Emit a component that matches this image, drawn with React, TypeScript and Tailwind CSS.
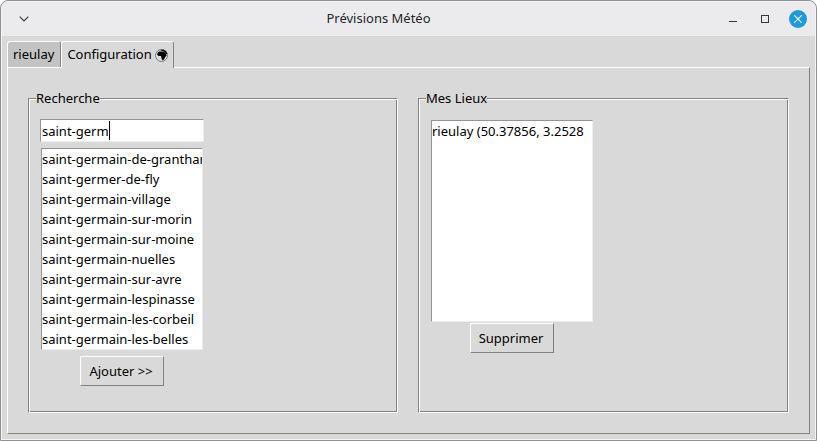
import React, { useState } from "react";

const results = [
  "saint-germain-de-grantham",
  "saint-germer-de-fly",
  "saint-germain-village",
  "saint-germain-sur-morin",
  "saint-germain-sur-moine",
  "saint-germain-nuelles",
  "saint-germain-sur-avre",
  "saint-germain-lespinasse",
  "saint-germain-les-corbeil",
  "saint-germain-les-belles",
];

const places = ["rieulay (50.37856, 3.2528"];

const sunken =
  "border border-t-[#949494] border-l-[#949494] border-r-[#ededed] border-b-[#ededed] bg-white outline-none";

function Globe() {
  return (
    <svg width="13" height="13" viewBox="0 0 26 26" aria-hidden="true">
      <circle cx="13" cy="13" r="12" fill="#dedede" stroke="#555" strokeWidth="1.4" />
      <path
        d="M8 5 L14 5 L20 7 L22 11 L24 12 L21 15 L19 19 L16 23 L14 22 L13 18 L12 14 L7 14 L4 11 L6 7 Z"
        fill="#000"
      />
      <path d="M10 2 L17 1 L22 4 L25 10 L21 10 L19 6 L14 4 Z" fill="#111" />
    </svg>
  );
}

function TitleBar() {
  return (
    <header className="grid h-[34px] grid-cols-[auto_1fr_auto] items-center bg-[#ebebed] pr-2 pl-[14px] text-[#232629]">
      <button type="button" aria-label="Menu" className="flex size-4 items-center justify-center">
        <svg width="10" height="6" viewBox="0 0 10 6" fill="none" stroke="#3b3e41" strokeWidth="1.2">
          <path d="M0.7 0.7 L5 5 L9.3 0.7" />
        </svg>
      </button>
      <h1 className="pb-[2px] text-center leading-5">Prévisions Météo</h1>
      <div className="flex items-center justify-end gap-4">
        <button type="button" aria-label="Réduire" className="flex size-4 items-center justify-center">
          <svg width="8" height="8" viewBox="0 0 8 8">
            <rect y="6" width="8" height="1" fill="#35383b" />
          </svg>
        </button>
        <button type="button" aria-label="Agrandir" className="flex size-4 items-center justify-center">
          <svg width="8" height="8" viewBox="0 0 8 8">
            <rect x="0.5" y="0.5" width="7" height="7" fill="none" stroke="#35383b" />
          </svg>
        </button>
        <button
          type="button"
          aria-label="Fermer"
          className="flex size-[18px] items-center justify-center rounded-full bg-[#1d99dc]"
        >
          <svg width="8" height="8" viewBox="0 0 8 8" stroke="#fff" strokeWidth="1.1">
            <path d="M0.3 0.3 L7.7 7.7 M7.7 0.3 L0.3 7.7" />
          </svg>
        </button>
      </div>
    </header>
  );
}

function Group({ title, children }: { title: string; children: React.ReactNode }) {
  return (
    <fieldset className="min-w-0 border border-t-[#828282] border-r-white border-b-white border-l-[#828282] px-[11px] shadow-[inset_1px_1px_0_#fff,inset_-1px_-1px_0_#828282]">
      <legend className="-ml-1 bg-[#d9d9d9] leading-[18px]">{title}</legend>
      {children}
    </fieldset>
  );
}

function ListBox({ label, items }: { label: string; items: string[] }) {
  return (
    <select
      size={10}
      aria-label={label}
      className={`block h-[202px] w-[162px] appearance-none overflow-hidden p-0 pt-px ${sunken}`}
    >
      {items.map((item) => (
        <option key={item} className="h-5 min-h-5 overflow-hidden p-0 leading-5 whitespace-nowrap">
          {item}
        </option>
      ))}
    </select>
  );
}

function PushButton({ children }: { children: React.ReactNode }) {
  return (
    <button
      type="button"
      className="h-[30px] w-[84px] border border-t-white border-r-[#828282] border-b-[#828282] border-l-white pt-px pr-[2px]"
    >
      {children}
    </button>
  );
}

export default function App() {
  const [query, setQuery] = useState("saint-germ");
  return (
    <div className="min-h-screen bg-white font-['Noto_Sans',sans-serif] text-[13px] text-black">
      <div className="flex min-h-screen flex-col overflow-hidden rounded-t-lg border border-[#929296] bg-[#d9d9d9]">
        <div className="flex flex-1 flex-col overflow-hidden rounded-t-[7px] border border-[#f4f4f5]">
          <TitleBar />
          <main className="flex flex-1 flex-col p-[5px]">
            <div role="tablist" className="flex h-[27px]">
              <button
                type="button"
                role="tab"
                aria-selected="false"
                className="h-[26px] rounded-t-[3px] border border-b-0 border-t-white border-r-[#828282] border-l-white bg-[#c3c3c3] pr-[6px] pl-[5px]"
              >
                rieulay
              </button>
              <button
                type="button"
                role="tab"
                aria-selected="true"
                className="z-10 flex h-[27px] items-center gap-[3px] rounded-t-[3px] border border-b-0 border-t-white border-r-[#828282] border-l-white bg-[#d9d9d9] px-[5px]"
              >
                Configuration <Globe />
              </button>
            </div>
            <section
              role="tabpanel"
              className="-mt-px grid flex-1 grid-cols-[370fr_371fr] gap-5 border border-t-white border-r-[#828282] border-b-[#828282] border-l-white px-5 pt-[21px] pb-5"
            >
              <Group title="Recherche">
                <div className="mt-3 flex w-[164px] flex-col items-center gap-[6px]">
                  <div className="relative w-full">
                    <input
                      type="text"
                      aria-label="Rechercher un lieu"
                      value={query}
                      onChange={(e) => setQuery(e.target.value)}
                      className={`block h-[23px] w-full px-px ${sunken}`}
                    />
                    <span className="absolute top-[2px] left-[69px] h-[19px] w-px bg-black" />
                  </div>
                  <ListBox label="Résultats" items={results} />
                  <PushButton>Ajouter &gt;&gt;</PushButton>
                </div>
              </Group>
              <Group title="Mes Lieux">
                <div className="mt-[13px] flex w-[164px] flex-col items-center gap-px">
                  <ListBox label="Mes lieux" items={places} />
                  <PushButton>Supprimer</PushButton>
                </div>
              </Group>
            </section>
          </main>
        </div>
      </div>
    </div>
  );
}
